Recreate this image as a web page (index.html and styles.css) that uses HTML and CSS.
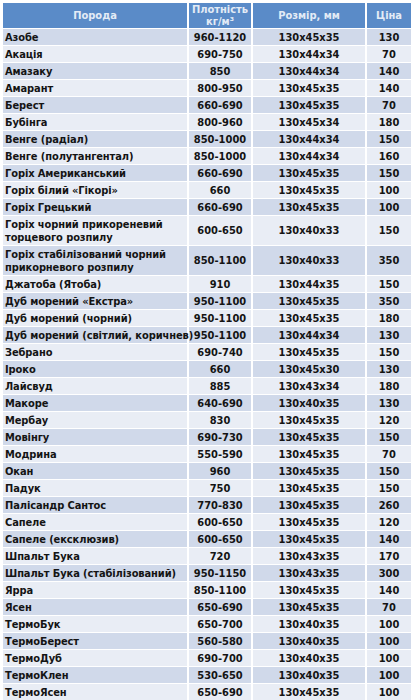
FILE: index.html
```html
<!DOCTYPE html>
<html lang="uk">
<head>
<meta charset="utf-8">
<title>Породи деревини</title>
<link rel="stylesheet" href="styles.css">
</head>
<body>
<table class="wood">
<colgroup>
<col class="c-name"><col class="c-dens"><col class="c-size"><col class="c-price">
</colgroup>
<thead>
<tr><th>Порода</th><th>Плотність<br>кг/м³</th><th>Розмір, мм</th><th>Ціна</th></tr>
</thead>
<tbody>
<tr><td>Азобе</td><td>960-1120</td><td>130x45x35</td><td>130</td></tr>
<tr><td>Акація</td><td>690-750</td><td>130x44x34</td><td>70</td></tr>
<tr><td>Амазаку</td><td>850</td><td>130x44x34</td><td>140</td></tr>
<tr><td>Амарант</td><td>800-950</td><td>130x45x35</td><td>140</td></tr>
<tr><td>Берест</td><td>660-690</td><td>130x45x35</td><td>70</td></tr>
<tr><td>Бубінга</td><td>800-960</td><td>130x45x34</td><td>180</td></tr>
<tr><td>Венге (радіал)</td><td>850-1000</td><td>130x44x34</td><td>150</td></tr>
<tr><td>Венге (полутангентал)</td><td>850-1000</td><td>130x44x34</td><td>160</td></tr>
<tr><td>Горіх Американський</td><td>660-690</td><td>130x45x35</td><td>150</td></tr>
<tr><td>Горіх білий «Гікорі»</td><td>660</td><td>130x45x35</td><td>100</td></tr>
<tr><td>Горіх Грецький</td><td>660-690</td><td>130x45x35</td><td>100</td></tr>
<tr class="tall"><td>Горіх чорний прикореневий торцевого розпилу</td><td>600-650</td><td>130x40x33</td><td>150</td></tr>
<tr class="tall"><td>Горіх стабілізований чорний прикорневого розпилу</td><td>850-1100</td><td>130x40x33</td><td>350</td></tr>
<tr><td>Джатоба (Ятоба)</td><td>910</td><td>130x44x35</td><td>150</td></tr>
<tr><td>Дуб морений «Екстра»</td><td>950-1100</td><td>130x45x35</td><td>350</td></tr>
<tr><td>Дуб морений (чорний)</td><td>950-1100</td><td>130x45x35</td><td>180</td></tr>
<tr><td>Дуб морений (світлий, коричнев)</td><td>950-1100</td><td>130x44x34</td><td>130</td></tr>
<tr><td>Зебрано</td><td>690-740</td><td>130x45x35</td><td>150</td></tr>
<tr><td>Іроко</td><td>660</td><td>130x45x30</td><td>130</td></tr>
<tr><td>Лайсвуд</td><td>885</td><td>130x43x34</td><td>180</td></tr>
<tr><td>Макоре</td><td>640-690</td><td>130x40x35</td><td>130</td></tr>
<tr><td>Мербау</td><td>830</td><td>130x45x35</td><td>120</td></tr>
<tr><td>Мовінгу</td><td>690-730</td><td>130x45x35</td><td>150</td></tr>
<tr><td>Модрина</td><td>550-590</td><td>130x45x35</td><td>70</td></tr>
<tr><td>Окан</td><td>960</td><td>130x45x35</td><td>150</td></tr>
<tr><td>Падук</td><td>750</td><td>130x45x35</td><td>150</td></tr>
<tr><td>Палісандр Сантос</td><td>770-830</td><td>130x45x35</td><td>260</td></tr>
<tr><td>Сапеле</td><td>600-650</td><td>130x45x35</td><td>120</td></tr>
<tr><td>Сапеле (ексклюзив)</td><td>600-650</td><td>130x45x35</td><td>140</td></tr>
<tr><td>Шпальт Бука</td><td>720</td><td>130x43x35</td><td>170</td></tr>
<tr><td>Шпальт Бука (стабілізований)</td><td>950-1150</td><td>130x43x35</td><td>300</td></tr>
<tr><td>Ярра</td><td>850-1100</td><td>130x45x35</td><td>140</td></tr>
<tr><td>Ясен</td><td>650-690</td><td>130x45x35</td><td>70</td></tr>
<tr><td>ТермоБук</td><td>650-700</td><td>130x40x35</td><td>100</td></tr>
<tr><td>ТермоБерест</td><td>560-580</td><td>130x40x35</td><td>100</td></tr>
<tr><td>ТермоДуб</td><td>690-700</td><td>130x40x35</td><td>100</td></tr>
<tr><td>ТермоКлен</td><td>530-650</td><td>130x40x35</td><td>100</td></tr>
<tr><td>ТермоЯсен</td><td>650-690</td><td>130x45x35</td><td>100</td></tr>
</tbody>
</table>
</body>
</html>
```
FILE: styles.css
```css
html, body {
  margin: 0;
  padding: 0;
  background: #ffffff;
}

body {
  padding: 3px 2px 0 3px;
}

.wood {
  width: 408px;
  table-layout: fixed;
  border-collapse: collapse;
  font-family: "DejaVu Sans Condensed", "DejaVu Sans", sans-serif;
  font-weight: bold;
  font-size: 11px;
  color: #141414;
}

.c-name { width: 185px; }
.c-dens { width: 64px; }
.c-size { width: 114px; }
.c-price { width: 45px; }

.wood th {
  height: 25px;
  padding: 0;
  background: #5a8bc8;
  color: #e3ebf6;
  font-size: 11px;
  line-height: 12px;
  text-align: center;
  border-left: 2px solid #ffffff;
}

.wood th:first-child,
.wood td:first-child {
  border-left: 0;
}

.wood td {
  height: 16px;
  padding: 0;
  line-height: 13px;
  text-align: center;
  border-left: 2px solid #ffffff;
  border-top: 1px solid #ffffff;
  white-space: nowrap;
}

.wood td:first-child {
  text-align: left;
  padding-left: 2px;
  letter-spacing: -0.1px;
}

.wood tbody tr:nth-child(odd) td {
  background: #d0d9ea;
}

.wood tbody tr:nth-child(even) td {
  background: #e9edf5;
}

.wood tr.tall td {
  height: 29px;
}

.wood tr.tall td:first-child {
  white-space: normal;
}
```
